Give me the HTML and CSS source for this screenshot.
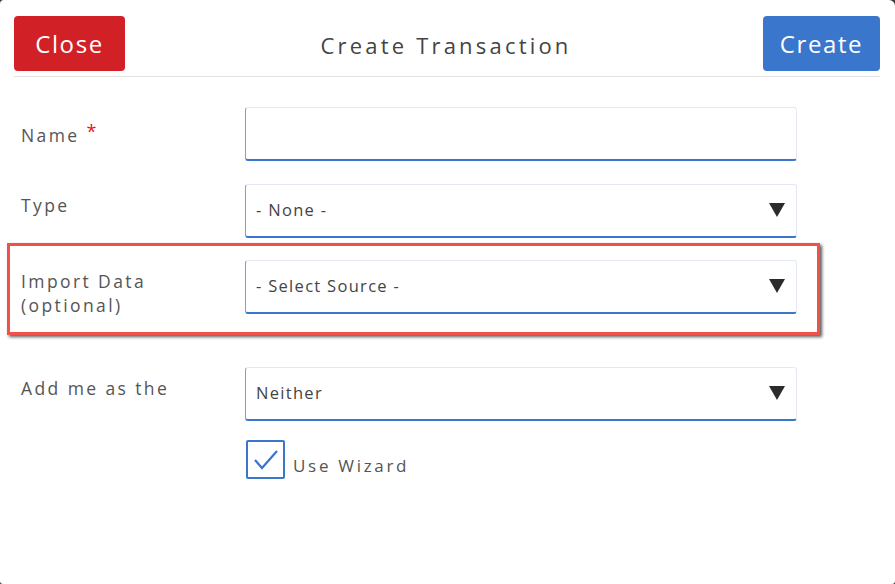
FILE: index.html
```html
<!DOCTYPE html>
<html>
<head>
<meta charset="utf-8">
<link rel="stylesheet" href="styles.css">
</head>
<body>
<div class="modal">
  <div class="header">
    <button class="btn btn-close">Close</button>
    <div class="title">Create Transaction</div>
    <button class="btn btn-create">Create</button>
  </div>
  <div class="form">
    <div class="row">
      <label class="label label-name">Name <span class="req">*</span></label>
      <div class="field"></div>
    </div>
    <div class="row">
      <label class="label">Type</label>
      <div class="field select"><span>- None -</span><svg class="arrow" width="16" height="14" viewBox="0 0 16 14"><polygon points="0,0 16,0 8,14" fill="#2b2b2b"/></svg></div>
    </div>
    <div class="row highlight">
      <label class="label label-two">Import Data<br>(optional)</label>
      <div class="field select"><span>- Select Source -</span><svg class="arrow" width="16" height="14" viewBox="0 0 16 14"><polygon points="0,0 16,0 8,14" fill="#2b2b2b"/></svg></div>
    </div>
    <div class="row">
      <label class="label">Add me as the</label>
      <div class="field select"><span>Neither</span><svg class="arrow" width="16" height="14" viewBox="0 0 16 14"><polygon points="0,0 16,0 8,14" fill="#2b2b2b"/></svg></div>
    </div>
    <div class="row row-check">
      <div></div>
      <div class="check">
        <span class="box"><svg width="31" height="31" viewBox="0 0 31 31"><polyline points="5,16 12,24 27,7" fill="none" stroke="#3a76cc" stroke-width="2.2"/></svg></span>
        <span class="check-label">Use Wizard</span>
      </div>
    </div>
  </div>
</div>
</body>
</html>
```
FILE: styles.css
```css
html, body {
  margin: 0;
  padding: 0;
  background: #3a3a3a;
  width: 895px;
  height: 584px;
  overflow: hidden;
}
.modal {
  width: 895px;
  height: 584px;
  background: #fff;
  border-radius: 4px 6px 3px 3px;
  font-family: "Open Sans", "DejaVu Sans", sans-serif;
  color: #555;
  box-sizing: border-box;
  padding: 16px 15px 0 14px;
}
.header {
  display: flex;
  align-items: center;
  justify-content: space-between;
  height: 55px;
  padding-bottom: 5px;
  border-bottom: 1px solid #e3e3e3;
}
.btn {
  height: 55px;
  border: none;
  border-radius: 4px;
  color: #fff;
  font-family: "Open Sans", sans-serif;
  font-size: 24px;
  letter-spacing: 1.6px;
  padding: 0;
  margin: 0;
}
.btn-close {
  width: 111px;
  background: #d12127;
}
.btn-create {
  width: 117px;
  background: #3a76cc;
}
.title {
  font-size: 22px;
  letter-spacing: 3.2px;
  color: #444;
  padding-top: 2px;
  margin-left: 4px;
}
.form {
  display: flex;
  flex-direction: column;
  align-items: flex-start;
  padding: 30px 0 0 7px;
}
.row {
  display: grid;
  grid-template-columns: 224px 552px;
  grid-template-rows: 54px;
  margin-bottom: 23px;
}
.label {
  font-size: 17.5px;
  letter-spacing: 2.4px;
  line-height: 24px;
  color: #555;
  padding-top: 9px;
  white-space: nowrap;
}
.label-name {
  padding-top: 16px;
}
.label-two {
  padding-top: 9px;
}
.req {
  color: #e8141b;
  font-size: 18px;
  position: relative;
  top: -4px;
  letter-spacing: 0;
}
.field {
  height: 54px;
  box-sizing: border-box;
  border: 1px solid #e4e8f4;
  border-left-color: #7d9ed8;
  border-bottom: 2px solid #3a76cc;
  border-radius: 3px;
  display: flex;
  align-items: center;
  justify-content: space-between;
  padding: 0 11px 2px 10px;
  font-size: 16.5px;
  letter-spacing: 1.3px;
  color: #444;
}
.arrow {
  display: block;
  margin-top: 1px;
}
.highlight {
  margin: -18px 0 32px -14px;
  padding: 14px 20px 18px 11px;
  border: 3px solid #f0524a;
  box-shadow: 2px 2px 3px rgba(0, 0, 0, 0.65);
}
.row-check {
  margin-top: -4px;
  grid-template-rows: auto;
}
.check {
  display: flex;
  align-items: center;
}
.box {
  width: 39px;
  height: 39px;
  box-sizing: border-box;
  border: 2px solid #3a76cc;
  border-radius: 2px;
  display: flex;
  align-items: center;
  justify-content: center;
  margin-left: 1px;
}
.box svg {
  display: block;
}
.check-label {
  font-size: 17px;
  letter-spacing: 2.7px;
  color: #555;
  margin-left: 8px;
  padding-top: 12px;
}
```
